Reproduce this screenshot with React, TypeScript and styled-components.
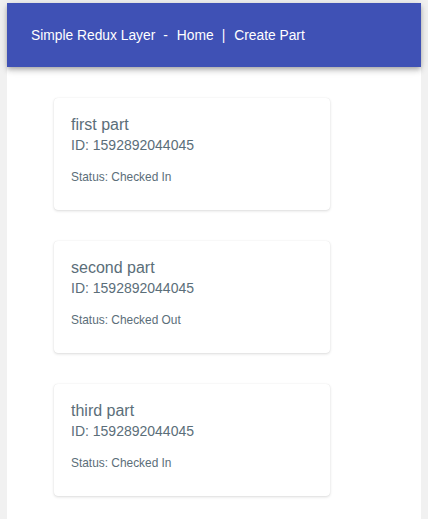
import React from 'react';
import styled, { createGlobalStyle } from 'styled-components';

/* -------------------- Data -------------------- */
type Part = {
  name: string;
  id: number;
  status: string;
};

const parts: Part[] = [
  { name: 'first part', id: 1592892044045, status: 'Checked In' },
  { name: 'second part', id: 1592892044045, status: 'Checked Out' },
  { name: 'third part', id: 1592892044045, status: 'Checked In' },
];

/* -------------------- Style -------------------- */
const GlobalStyle = createGlobalStyle`
  html, body {
    margin: 0;
    padding: 0;
    background: #f1f1f1;
    font-family: "Liberation Sans", Arial, sans-serif;
  }
`;

const Page = styled.div`
  margin: 3px 7px 0;
  min-height: 516px;
  background: #ffffff;
`;

const Header = styled.header`
  height: 64px;
  display: flex;
  align-items: center;
  padding-left: 24px;
  background: #3f51b5;
  color: #ffffff;
  font-size: 13.8px;
  box-shadow: 0 2px 4px -1px rgba(0, 0, 0, 0.2), 0 4px 5px 0 rgba(0, 0, 0, 0.14),
    0 1px 10px 0 rgba(0, 0, 0, 0.12);
  position: relative;
`;

const NavLink = styled.a`
  color: inherit;
  text-decoration: none;
`;

const Sep = styled.span`
  margin: 0 9px 0 8px;
`;

const List = styled.main`
  display: flex;
  flex-direction: column;
  gap: 31px;
  padding: 31px 0 0 47px;
`;

const Card = styled.section`
  width: 276px;
  height: 112px;
  box-sizing: border-box;
  padding: 17px 17px;
  border-radius: 4px;
  background: #ffffff;
  box-shadow: 0 1px 3px rgba(0, 0, 0, 0.14), 0 0 1px rgba(0, 0, 0, 0.1);
  color: #5b6e79;
`;

const Title = styled.div`
  font-size: 16px;
  line-height: 20px;
`;

const Id = styled.div`
  font-size: 14px;
  line-height: 20px;
`;

const Status = styled.div`
  margin-top: 14px;
  font-size: 11.9px;
  line-height: 16px;
`;

/* -------------------- DOM -------------------- */
const PartCard = ({ part }: { part: Part }) => (
  <Card>
    <Title>{part.name}</Title>
    <Id>ID: {part.id}</Id>
    <Status>Status: {part.status}</Status>
  </Card>
);

export default function App() {
  return (
    <>
      <GlobalStyle />
      <Page>
        <Header>
          <span>Simple Redux Layer</span>
          <Sep>-</Sep>
          <NavLink href="#">Home</NavLink>
          <Sep>|</Sep>
          <NavLink href="#">Create Part</NavLink>
        </Header>
        <List>
          {parts.map((part) => (
            <PartCard key={part.name} part={part} />
          ))}
        </List>
      </Page>
    </>
  );
}
